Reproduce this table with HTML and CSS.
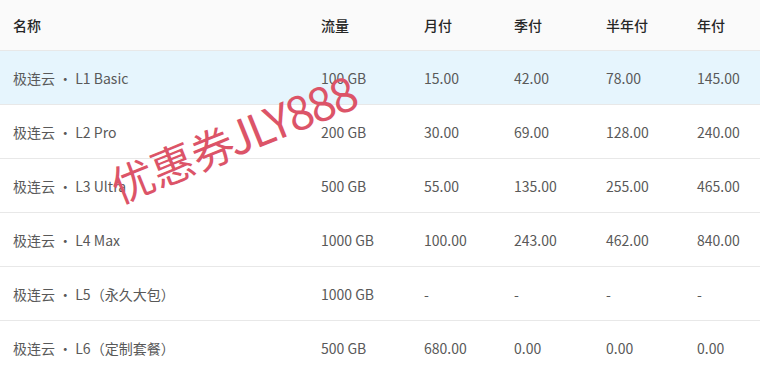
FILE: index.html
```html
<!DOCTYPE html>
<html lang="zh">
<head>
<meta charset="utf-8">
<link rel="stylesheet" href="styles.css">
</head>
<body>
<div class="wrap">
  <div class="table">
    <div class="row head">
      <div class="cell">名称</div><div class="cell">流量</div><div class="cell">月付</div><div class="cell">季付</div><div class="cell">半年付</div><div class="cell">年付</div>
    </div>
    <div class="row hl">
      <div class="cell">极连云 · L1 Basic</div><div class="cell">100 GB</div><div class="cell">15.00</div><div class="cell">42.00</div><div class="cell">78.00</div><div class="cell">145.00</div>
    </div>
    <div class="row">
      <div class="cell">极连云 · L2 Pro</div><div class="cell">200 GB</div><div class="cell">30.00</div><div class="cell">69.00</div><div class="cell">128.00</div><div class="cell">240.00</div>
    </div>
    <div class="row">
      <div class="cell">极连云 · L3 Ultra</div><div class="cell">500 GB</div><div class="cell">55.00</div><div class="cell">135.00</div><div class="cell">255.00</div><div class="cell">465.00</div>
    </div>
    <div class="row">
      <div class="cell">极连云 · L4 Max</div><div class="cell">1000 GB</div><div class="cell">100.00</div><div class="cell">243.00</div><div class="cell">462.00</div><div class="cell">840.00</div>
    </div>
    <div class="row">
      <div class="cell">极连云 · L5（永久大包）</div><div class="cell">1000 GB</div><div class="cell">-</div><div class="cell">-</div><div class="cell">-</div><div class="cell">-</div>
    </div>
    <div class="row">
      <div class="cell">极连云 · L6（定制套餐）</div><div class="cell">500 GB</div><div class="cell">680.00</div><div class="cell">0.00</div><div class="cell">0.00</div><div class="cell">0.00</div>
    </div>
  </div>
  <div class="watermark">优惠券<span class="wm-latin">JLY888</span></div>
</div>
</body>
</html>
```
FILE: styles.css
```css
html, body {
  margin: 0;
  padding: 0;
  background: #ffffff;
}
body {
  font-family: "Noto Sans CJK SC", "Noto Sans", sans-serif;
  font-size: 14px;
  color: #595959;
}
.wrap {
  position: relative;
  width: 760px;
  height: 365px;
  overflow: hidden;
}
.table {
  display: flex;
  flex-direction: column;
}
.row {
  display: grid;
  grid-template-columns: 308px 103px 90px 92px 91px 1fr;
  height: 53px;
  align-items: center;
  border-bottom: 1px solid #e8e8e8;
}
.row.head {
  height: 50px;
  background: #fafafa;
  color: #262626;
  font-weight: 500;
}
.row.hl {
  background: #e6f5fd;
}
.cell {
  padding-left: 13px;
  white-space: nowrap;
}
.watermark {
  position: absolute;
  left: 102px;
  top: 114px;
  font-family: "Noto Sans CJK SC", sans-serif;
  font-size: 43px;
  line-height: 1;
  color: #dc5468;
  transform: rotate(-22deg);
  transform-origin: center center;
  white-space: nowrap;
}
.wm-latin {
  margin-left: -4px;
  font-size: 46px;
  letter-spacing: -2px;
}
```
